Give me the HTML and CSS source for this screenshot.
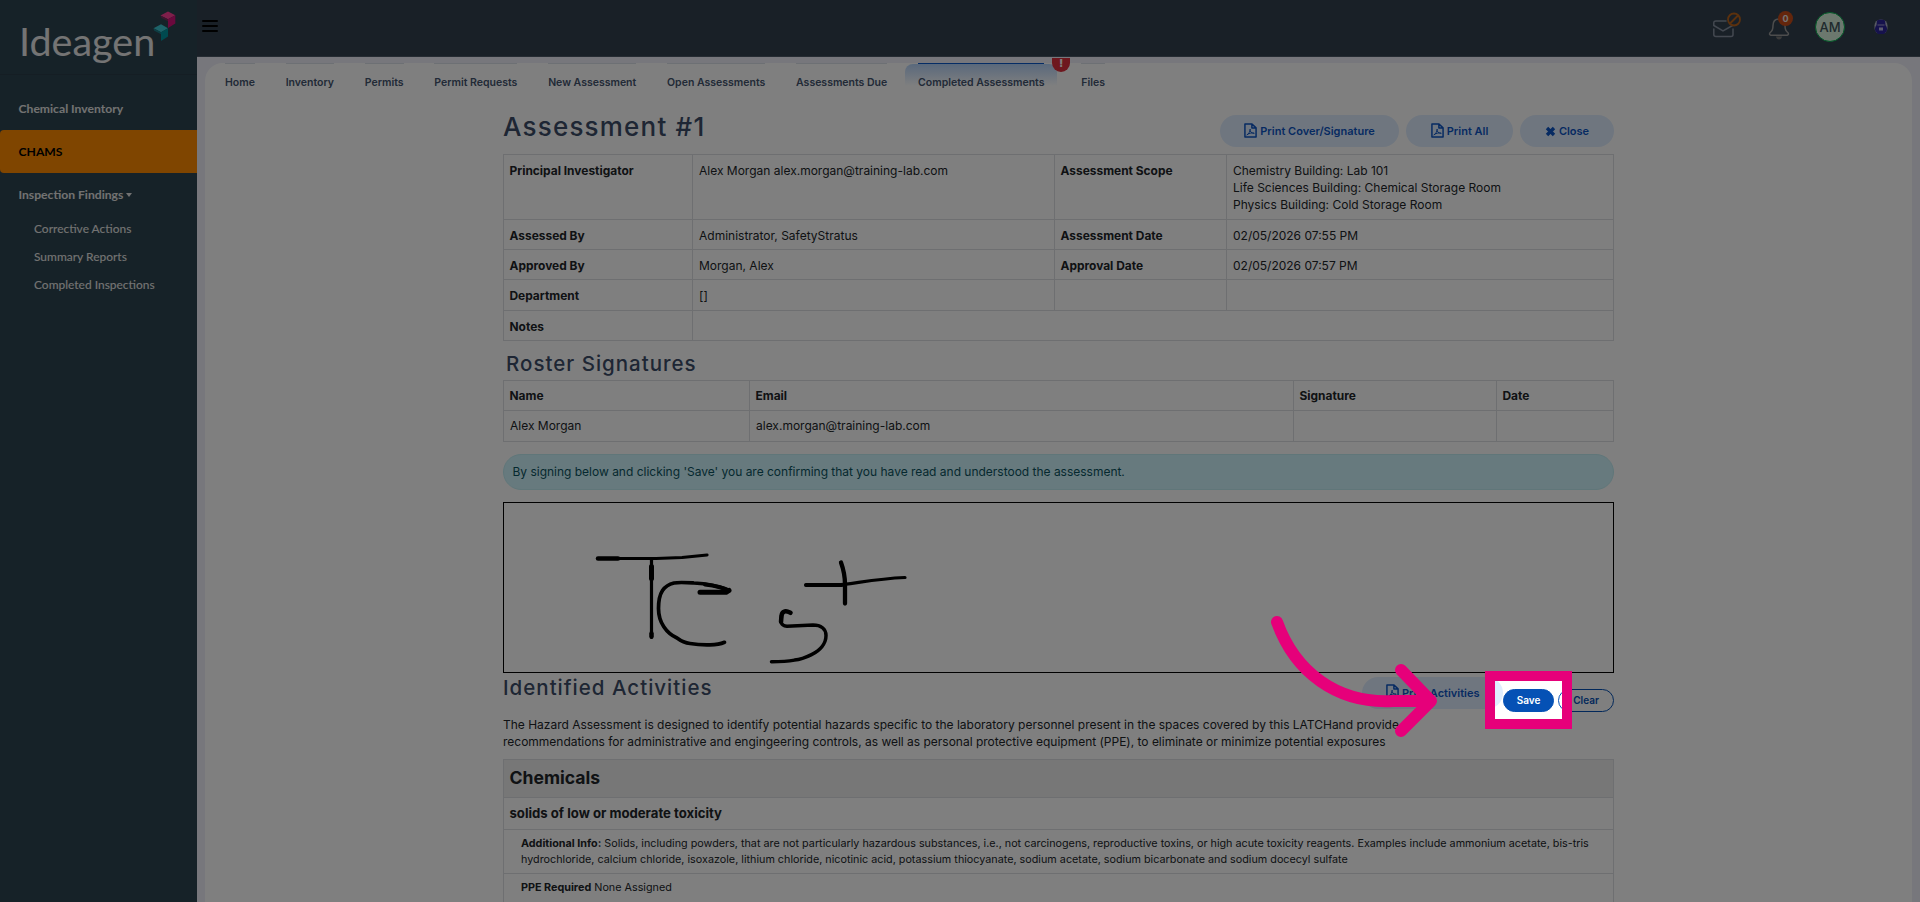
FILE: index.html
```
<!DOCTYPE html>
<html lang="en">
<head>
<meta charset="utf-8">
<title>Assessment #1</title>
<link rel="stylesheet" href="styles.css">
</head>
<body>
<svg class="defs" width="0" height="0">
  <symbol id="pdf" viewBox="0 0 14 16"><path d="M1 .9h7.6L13 5.200v9.900H1zM8.500.9v4.400H13" fill="none" stroke="currentColor" stroke-width="1.600" stroke-linejoin="round"/><path d="M3 12.800c1.800-.8 3.700-3.800 3.600-6.300-.5 2.500 1.300 4.600 4.500 4.500-2-.9-5.600-.2-8.100 1.800z" fill="none" stroke="currentColor" stroke-width="1"/></symbol>
</svg>
<div class="app">
  <aside class="sidebar">
    <div class="logo"><span class="logo-text">Ideagen</span>
      <svg class="logo-mark" width="24" height="32" viewBox="0 0 24 32">
        <path d="M7.500 4.500 15 .5l7.300 3.800-7.300 4z" fill="#ff3f97"/><path d="M22.300 4.300v8.200L15 17V8.300z" fill="#d4127a"/><path d="M7.500 4.500 15 8.300v2L8.500 7z" fill="#7a2b5c"/>
        <path d="M.5 17.300 8 13.200l7 4-7 4z" fill="#3cc6d2"/><path d="M15 17.200v8.300l-7 4.500v-8.800z" fill="#00959f"/><path d="M.5 17.300 8 21.200v2l-7-3.700z" fill="#1c7c88"/>
      </svg>
    </div>
    <nav class="menu">
      <a class="item">Chemical Inventory</a>
      <a class="item active">CHAMS</a>
      <a class="item">Inspection Findings <i class="caret"></i></a>
      <a class="sub">Corrective Actions</a>
      <a class="sub">Summary Reports</a>
      <a class="sub">Completed Inspections</a>
    </nav>
  </aside>
  <div class="main">
    <header class="topbar">
      <span class="burger"><i></i><i></i><i></i></span>
      <div class="tools">
        <svg class="mail" width="30" height="28" viewBox="0 0 30 28"><path d="M14 9H4Q1.800 9 1.800 11v2.500L11 19l9.500-5.500M1.800 17v5.500q0 2 2.200 2h15q2 0 2-2V17" fill="none" stroke="#8790a0" stroke-width="1.500" stroke-linecap="round"/><circle cx="22" cy="7.500" r="6" fill="#33414f" stroke="#b8621b" stroke-width="1.800"/><path d="m18 11.500 8-8" stroke="#b8621b" stroke-width="1.800"/></svg>
        <span class="bell"><svg width="22" height="24" viewBox="0 0 22 24"><path d="M11 3c-4.500 0-6 3-6 6.500 0 4.500-1 5.500-3.200 7.500-.6 1.200 0 2 1 2.200h16.400c1-.2 1.600-1 1-2.200-2.200-2-3.200-3-3.200-7.500C17 6 15.500 3 11 3z" fill="none" stroke="#9a9a9a" stroke-width="1.500"/><path d="M8 20.500h6q-.5 3-3 3t-3-3z" fill="#777"/></svg><b>0</b></span>
        <span class="avatar">AM</span>
        <svg class="bot" width="14" height="16" viewBox="0 0 14 16"><rect x=".5" y=".5" width="13" height="14.500" rx="6" fill="#aeb2c4"/><path d="M3 1.500Q7-.5 11 1.500l.5 4.500Q14 9 12.500 12.500L10 15H4l-2.500-2.500Q0 9 2.500 6z" fill="#2d249a"/><path d="M3.500 6h7" stroke="#8f8dc8" stroke-width="1.200"/><path d="M5 8.500h4v3H5z" fill="#b9b8dd"/></svg>
      </div>
    </header>
    <section class="panel">
      <nav class="tabs">
        <a>Home</a><a>Inventory</a><a>Permits</a><a>Permit Requests</a><a>New Assessment</a><a>Open Assessments</a><a>Assessments Due</a><a class="on">Completed Assessments<b>!</b></a><a>Files</a>
      </nav>
      <div class="content">
        <div class="head">
          <h1>Assessment #1</h1>
          <div class="actions">
            <span class="pill cover"><svg width="13" height="15"><use href="#pdf"/></svg>Print Cover/Signature</span>
            <span class="pill all"><svg width="13" height="15"><use href="#pdf"/></svg>Print All</span>
            <span class="pill close"><svg class="x" width="11" height="11" viewBox="0 0 11 11"><path d="m2 2 7 7m0-7L2 9" stroke="currentColor" stroke-width="3.400"/></svg>Close</span>
          </div>
        </div>
        <table class="info">
          <colgroup><col class="c1"><col class="c2"><col class="c3"><col class="c4"></colgroup>
          <tr class="tall"><th>Principal Investigator</th><td>Alex Morgan alex.morgan@training-lab.com</td><th>Assessment Scope</th><td>Chemistry Building: Lab 101<br>Life Sciences Building: Chemical Storage Room<br>Physics Building: Cold Storage Room</td></tr>
          <tr><th>Assessed By</th><td>Administrator, SafetyStratus</td><th>Assessment Date</th><td>02/05/2026 07:55 PM</td></tr>
          <tr><th>Approved By</th><td>Morgan, Alex</td><th>Approval Date</th><td>02/05/2026 07:57 PM</td></tr>
          <tr class="dept"><th>Department</th><td>[]</td><th></th><td></td></tr>
          <tr><th>Notes</th><td colspan="3"></td></tr>
        </table>
        <h2 class="roster-title">Roster Signatures</h2>
        <table class="roster">
          <colgroup><col class="r1"><col class="r2"><col class="r3"><col class="r4"></colgroup>
          <tr><th>Name</th><th>Email</th><th>Signature</th><th>Date</th></tr>
          <tr><td>Alex Morgan</td><td>alex.morgan@training-lab.com</td><td></td><td></td></tr>
        </table>
        <div class="alert">By signing below and clicking 'Save' you are confirming that you have read and understood the assessment.</div>
        <div class="signature">
          <svg width="1109" height="169" viewBox="504 502.500 1109 169" fill="none" stroke="#000" stroke-linecap="round" stroke-linejoin="round">
            <path d="M598 558h58l26-1 25-2.500" stroke-width="3.200"/><path d="M598 558h20" stroke-width="4.500"/>
            <path d="M651.500 560v77" stroke-width="3.200"/><path d="M651.500 566v12" stroke-width="5"/><path d="M651.500 633v3" stroke-width="4.500"/>
            <path d="M729 590c-9-4-20-7-35-7.500-8-.5-15-1-20 0-10 2.500-15.500 9-15.500 25.500 0 14 8 25 18.500 29.500 4 3 8 5 13 5.500 6 1 12 1.500 20 1.300q9 0 14.500-2.500" stroke-width="3.700"/><path d="M700 591.800h26l3-2" stroke-width="5"/><path d="M705 584q16 2 24 6" stroke-width="4"/>
            <path d="M790.500 612.300q-8-4-9 3l-.5 6q1 4 6 4.500l26-1.200c8 0 13 4 13 10.500 0 8-6 15-14.500 19-6 3-12 5-17 5.500q-9 1.700-23 1.700" stroke-width="3.500"/><path d="M790.500 612.300q-8-4-9 3l-.5 6" stroke-width="4.500"/>
            <path d="M806 584.500h28c16 0 36-6 71-7.500" stroke-width="3.200"/><path d="M806 584.500h36" stroke-width="4"/>
            <path d="M841 562q4 11 4 22v19" stroke-width="4.300"/>
          </svg>
        </div>
        <div class="act-head">
          <h2>Identified Activities</h2>
          <div class="act-buttons">
            <span class="pill act"><svg width="13" height="15"><use href="#pdf"/></svg>Print Activities</span>
            <span class="save">Save</span>
            <span class="clear">Clear</span>
          </div>
        </div>
        <p class="desc">The Hazard Assessment is designed to identify potential hazards specific to the laboratory personnel present in the spaces covered by this LATCHand provide<br>recommendations for administrative and engingeering controls, as well as personal protective equipment (PPE), to eliminate or minimize potential exposures</p>
        <div class="hazards">
          <h3>Chemicals</h3>
          <h4>solids of low or moderate toxicity</h4>
          <div class="note add"><b>Additional Info:</b> Solids, including powders, that are not particularly hazardous substances, i.e., not carcinogens, reproductive toxins, or high acute toxicity reagents. Examples include ammonium acetate, bis-tris<br>hydrochloride, calcium chloride, isoxazole, lithium chloride, nicotinic acid, potassium thiocyanate, sodium acetate, sodium bicarbonate and sodium docecyl sulfate</div>
          <div class="note"><b>PPE Required</b> None Assigned</div>
        </div>
      </div>
    </section>
  </div>
  <div class="spotlight"></div>
  <svg class="arrow" width="180" height="130" viewBox="1265 610 180 130"><path d="M1277 622c18 50 60 82 116 79h38M1401 670l30 31-30 30" fill="none" stroke="#e6007a" stroke-width="12" stroke-linecap="round" stroke-linejoin="round"/></svg>
</div>
</body>
</html>
```
FILE: styles.css
```
* { box-sizing: border-box; }
body { margin: 0; font-family: Inter, "Liberation Sans", sans-serif; font-size: 12px; color: #212529; background: #eeeff8; }
.defs { position: absolute; }
.app { position: relative; display: flex; width: 1920px; height: 902px; overflow: hidden; }
.sidebar { width: 197px; height: 902px; background: #2d4450; color: #e4e4e4; font-family: Lato, "Open Sans", sans-serif; }
.logo { display: flex; height: 75px; padding-left: 19px; border-bottom: 1px solid #2a3d48; color: #e8e8e8; }
.logo-text { width: 134px; font-size: 39.500px; line-height: 44px; margin-top: 19px; white-space: nowrap; }
.logo-mark { margin-top: 11px; }
.menu { padding-top: 12px; }
.item { display: flex; align-items: center; height: 43px; padding-left: 18.500px; font-size: 12.150px; font-weight: 700; }
.item.active { background: #ff8b00; color: #000; border-radius: 4px 0 0 4px; }
.caret { margin-left: 3px; border: 3.500px solid transparent; border-top: 4px solid currentColor; border-bottom: 0; }
.sub { display: block; height: 27.800px; line-height: 27.800px; padding-left: 34px; font-size: 11.950px; font-weight: 500; }
.item + .sub { margin-top: -1px; }
.main { width: 1723px; }
.topbar { display: flex; justify-content: space-between; height: 57px; padding-left: 5px; background: #33414f; border-bottom: 1px solid #4c5967; }
.burger { display: flex; flex-direction: column; gap: 2.500px; margin-top: 19.500px; width: 16px; }
.burger i { height: 2.500px; border-radius: 1px; background: #000; }
.tools { display: flex; width: 208px; height: 57px; }
.mail { margin-top: 12px; }
.bell { position: relative; width: 22px; margin: 16px 0 0 26px; }
.bell b { position: absolute; left: 10px; top: -5px; width: 15px; height: 15px; border-radius: 50%; background: #c94c18; color: #e8e8e8; font-size: 9px; line-height: 15px; text-align: center; }
.avatar { width: 30px; height: 30px; margin: 12px 0 0 25px; border: 1px solid #00b04c; border-radius: 50%; background: #d8f0dd; color: #40545b; font-weight: 500; font-size: 13px; line-height: 28px; text-align: center; }
.bot { margin: 19px 0 0 29px; }
.panel { width: 1707px; height: 839px; margin: 6px 0 0 8px; background: #fff; border-radius: 18px 18px 0 0; }
.tabs { display: flex; gap: 30.800px; height: 45px; padding-left: 20px; font-size: 10.500px; font-weight: 600; line-height: 38px; color: #44546e; white-space: nowrap; }
.tabs a { border-top: 1px solid #dbe0e8; height: 40px; }
.tabs .on { position: relative; margin-right: 6px; border-top: 1px solid #0a58ca; z-index: 0; }
.tabs .on::before { content: ""; position: absolute; z-index: -1; left: -13px; right: -13px; top: 0; height: 22px; border-radius: 8px 8px 0 0; background: linear-gradient(#b4d2f8, #fff); }
.tabs b { position: absolute; left: 134px; top: -6px; width: 18px; height: 14px; border-radius: 0 0 9px 9px; background: #dc2e3d; color: #fff; font-size: 10px; line-height: 11px; text-align: center; }
.content { width: 1111px; margin-left: 298px; }
.head { display: flex; justify-content: space-between; height: 46px; }
h1, h2 { margin: 0; color: #3c4d68; font-weight: 550; white-space: nowrap; }
h1 { font-size: 26px; line-height: 38px; letter-spacing: 1.200px; }
h2 { font-size: 20.500px; line-height: 30px; letter-spacing: 1px; }
.actions { display: flex; gap: 7px; padding-top: 7px; }
.pill { display: flex; align-items: center; justify-content: center; gap: 3px; height: 32px; border-radius: 16px; background: #dfedff; color: #0d55c4; font-size: 11px; font-weight: 600; white-space: nowrap; }
.pill svg { margin-bottom: 2px; }
.pill .x { margin-bottom: 0; }
.cover { width: 179px; } .all { width: 107px; } .close { width: 94px; }
table { width: 1110px; table-layout: fixed; border-collapse: collapse; }
th, td { height: 30px; padding: 6px; border: 1px solid #dcdfe2; line-height: 17.200px; text-align: left; vertical-align: top; font-size: 12px; }
.info th, .info td { padding-top: 7px; padding-bottom: 5px; }
th { padding-left: 5.500px; font-size: 11.950px; font-weight: 700; }
.tall { height: 64px; } .dept { height: 31px; }
.c1 { width: 189px; } .c2 { width: 362px; } .c3 { width: 172px; } .c4 { width: 387px; }
.r1 { width: 246px; } .r2 { width: 544px; } .r3 { width: 203px; } .r4 { width: 117px; }
.roster-title { height: 39px; padding: 8px 0 0 3px; }
.alert { height: 36px; margin-top: 12px; padding-left: 8.500px; border: 1px solid #c0edf3; border-radius: 18px; background: #cff4fc; color: #0b5360; line-height: 34px; letter-spacing: -.01px; }
.signature { height: 171px; margin-top: 12px; border: 1px solid #000; }
.signature svg { display: block; }
.act-head { display: flex; justify-content: space-between; height: 43px; }
.act-buttons { display: flex; padding-top: 4px; }
.act { width: 141px; justify-content: flex-start; padding-left: 24px; }
.save, .clear { height: 23px; margin-top: 12px; border-radius: 12px; border: 1px solid #0551b5; font-size: 10px; line-height: 21px; text-align: center; font-weight: 600; }
.save { width: 51px; background: #0551b5; color: #fff; }
.clear { width: 56px; margin-left: 4px; color: #0551b5; }
.desc { margin: 0; height: 43.500px; padding-top: .5px; line-height: 17.200px; letter-spacing: -.012px; white-space: nowrap; }
.hazards { height: 180px; border: 1px solid #dcdfe2; white-space: nowrap; }
.hazards h3 { margin: 0; height: 38px; padding-left: 5.500px; background: #efefef; border-bottom: 1px solid #dcdfe2; font-size: 17.600px; line-height: 36px; }
.hazards h4 { margin: 0; height: 32px; padding-left: 5.500px; border-bottom: 1px solid #dcdfe2; font-size: 13.150px; line-height: 31px; }
.note { padding: 6px 0 0 17px; font-size: 10.790px; line-height: 16px; }
.add { height: 44px; border-bottom: 1px solid #dcdfe2; }
.spotlight { position: absolute; z-index: 5; left: 1485px; top: 671px; width: 87px; height: 58px; border: 10px solid #e6007a; box-shadow: 0 0 0 2000px rgba(0,0,0,.5); }
.arrow { position: absolute; z-index: 6; left: 1265px; top: 610px; }
```
